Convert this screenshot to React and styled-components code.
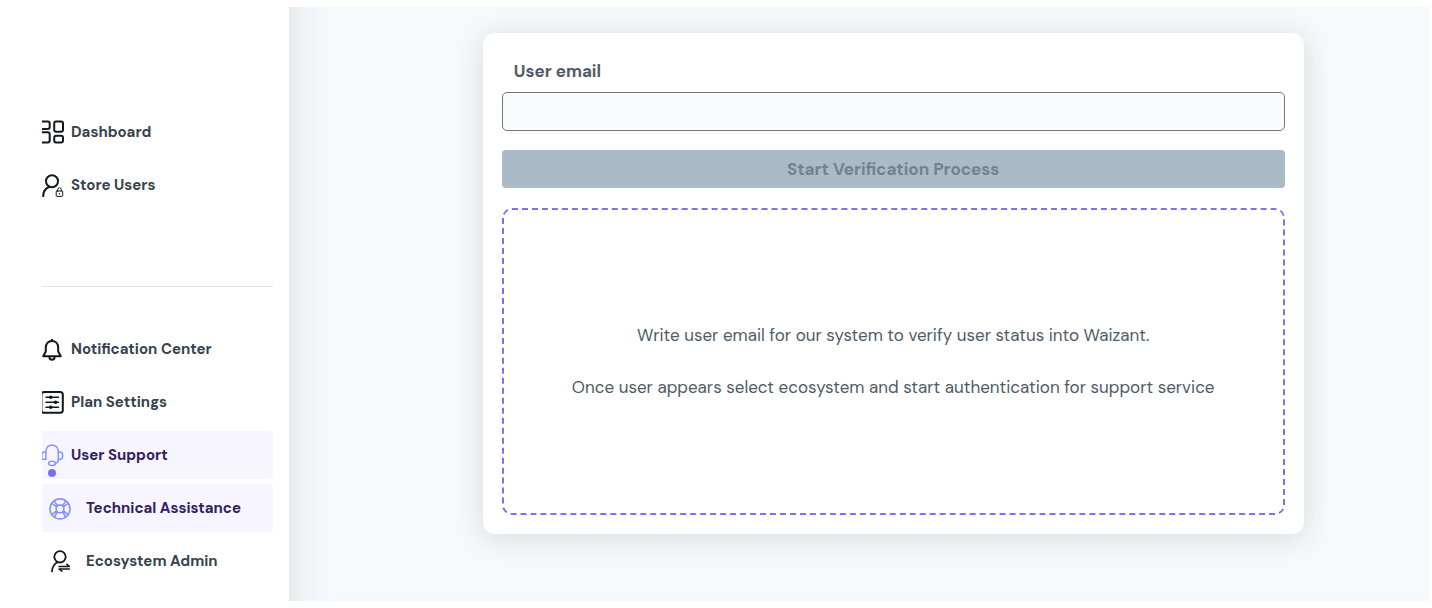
import React from "react";
import styled, { createGlobalStyle, css } from "styled-components";

const GlobalStyle = createGlobalStyle`
  *, *::before, *::after { box-sizing: border-box; }
  body {
    margin: 0;
    background: #ffffff;
    color: #4b5563;
    font-family: "DM Sans", "Open Sans", "Liberation Sans", sans-serif;
  }
`;

const Page = styled.div`
  display: grid;
  grid-template-columns: 289px 1fr;
  min-height: 100vh;
  padding: 7px 3px 7px 0;
`;

const Sidebar = styled.aside`
  padding: 101px 16px 0 42px;
`;

const NavList = styled.ul`
  display: flex;
  flex-direction: column;
  gap: 5px;
  margin: 0;
  padding: 0;
  list-style: none;
`;

const Divider = styled.hr`
  height: 1px;
  margin: 77px 0 38px;
  border: 0;
  background: #dde3ea;
`;

const NavLink = styled.a`
  position: relative;
  display: flex;
  align-items: center;
  gap: ${({ $sub }) => ($sub ? 14 : 5)}px;
  height: 48px;
  padding-left: ${({ $sub }) => ($sub ? 6 : 0)}px;
  border-radius: 0 4px 4px 0;
  color: #36434f;
  font-size: 15px;
  font-weight: 700;
  line-height: 20px;
  white-space: nowrap;
  text-decoration: none;

  ${({ $active }) =>
    $active &&
    css`
      background: #f7f5ff;
      color: #32205f;
    `}
`;

const Icon = styled.svg`
  flex: none;
  width: 24px;
  height: 24px;
  overflow: hidden;
  fill: none;
  stroke: ${({ $accent }) => ($accent ? "#8795fb" : "#10181f")};
  stroke-width: 2;
  stroke-linecap: round;
  stroke-linejoin: round;
`;

const ActiveDot = styled.span`
  position: absolute;
  bottom: 2px;
  left: 6px;
  width: 8px;
  height: 8px;
  border-radius: 50%;
  background: #7b6ef6;
`;

const Main = styled.main`
  padding: 26px 11% 26px 17%;
  background: linear-gradient(to right, #e7eaec, #f0f3f5 14px, #f5f9fc 36px);
`;

const Card = styled.form`
  display: flex;
  flex-direction: column;
  padding: 19px;
  border-radius: 12px;
  background: #ffffff;
  box-shadow: 0 4px 28px rgba(40, 40, 30, 0.14);
`;

const Label = styled.label`
  margin-bottom: 9px;
  padding: 7px 12px 0;
  color: #4f5b67;
  font-size: 17px;
  font-weight: 700;
  line-height: 24px;
`;

const EmailInput = styled.input`
  height: 39px;
  padding: 0 12px;
  border: 1px solid #6c7884;
  border-radius: 5px;
  background: #fafbfd;
  color: inherit;
  font: inherit;
`;

const SubmitButton = styled.button`
  height: 38px;
  margin: 19px 0 20px;
  border: 0;
  border-radius: 4px;
  background: #abbac7;
  color: #718293;
  font-family: inherit;
  font-size: 17px;
  font-weight: 700;
`;

const Hint = styled.section`
  display: flex;
  flex-direction: column;
  align-items: center;
  justify-content: center;
  gap: 28px;
  min-height: 307px;
  padding-bottom: 2px;
  border: 2px dashed #7f70f5;
  border-radius: 10px;
  text-align: center;
`;

const HintText = styled.p`
  margin: 0;
  color: #4f5b67;
  font-size: 17px;
  line-height: 24px;
`;

const DashboardIcon = () => (
  <Icon viewBox="0 0.8 24 24" aria-hidden="true">
    <rect x="-3" y="2.3" width="10.7" height="7.4" rx="2" />
    <rect x="-3" y="13" width="10.7" height="10.3" rx="2" />
    <rect x="12.2" y="2.3" width="8.8" height="10.2" rx="2" />
    <rect x="12.2" y="16.5" width="8.8" height="6.8" rx="2" />
  </Icon>
);

const StoreUsersIcon = () => (
  <Icon viewBox="0 0 24 24" aria-hidden="true">
    <circle cx="10" cy="8.3" r="6" />
    <path d="M1.2 23.2C1.2 19 3.2 15.6 7 14" />
    <g strokeWidth="1">
      <rect x="14.2" y="18" width="6.5" height="5.4" rx="0.8" />
      <path d="M15.7 18V16.6a1.8 1.8 0 0 1 3.6 0V18M17.4 20.4v0.6" />
    </g>
  </Icon>
);

const BellIcon = () => (
  <Icon viewBox="0 0 24 24" aria-hidden="true">
    <path d="M10 2.8V4M10 4C6 4 3.8 7 3.8 10.6V14.5L1.2 19.2H18.8L16.2 14.5V10.6C16.2 7 14 4 10 4Z" />
    <path d="M7.4 20.5C7.8 23.4 12.2 23.4 12.6 20.5" />
  </Icon>
);

const SettingsIcon = () => (
  <Icon viewBox="0 0 24 24" aria-hidden="true">
    <rect x="-0.6" y="2" width="21.4" height="20.8" rx="2.6" />
    <path strokeWidth="1.4" d="M4 7.3h12.5M4 12.3h12.5M4 17.3h12.5" />
    <path strokeWidth="3.4" d="M8.7 7.3h0.1M13.5 12.3h0.1M8.7 17.3h0.1" />
  </Icon>
);

const HeadsetIcon = () => (
  <Icon viewBox="0 0 24 24" $accent aria-hidden="true">
    <g strokeWidth="1.5">
      <path d="M3.9 16.4V8.2a6.2 6.2 0 0 1 12.4 0v8.2c0 2-1 3.4-2.9 3.8" />
      <path d="M16.3 9h1.5a2.8 2.8 0 0 1 2.8 2.8v1.8a2.8 2.8 0 0 1-2.8 2.8h-1.5" />
      <path d="M3.9 9H2.4A2.8 2.8 0 0 0-0.4 11.8M-0.4 16.2H3.9" />
      <path d="M0 10.4v6" strokeWidth="1" />
      <ellipse cx="10" cy="20.4" rx="3.4" ry="2.2" />
    </g>
  </Icon>
);

const LifebuoyIcon = () => (
  <Icon viewBox="0 -0.2 24 24" $accent aria-hidden="true">
    <g strokeWidth="1.6">
      <circle cx="12" cy="12.7" r="10" />
      <rect x="8.2" y="8.9" width="7.6" height="7.6" rx="3" />
      <path d="M6.4 4.6 9.3 9.6M4 7.1 8.6 10.6M17.6 4.6 14.7 9.6M20 7.1 15.4 10.6M6.4 20.8 9.3 15.8M4 18.3 8.6 14.8M17.6 20.8 14.7 15.8M20 18.3 15.4 14.8" />
    </g>
  </Icon>
);

const EcosystemIcon = () => (
  <Icon viewBox="0 0 24 24" aria-hidden="true">
    <g strokeWidth="1.8">
      <circle cx="12" cy="7.8" r="5.7" />
      <path d="M4 22.4C4.2 18 6 15 9.3 13.2" />
    </g>
    <path strokeWidth="1.5" d="M11 17.4H21.4L18.8 15.4M21.4 20H11L13.8 22.2" />
  </Icon>
);

const primaryNav = [
  { label: "Dashboard", icon: DashboardIcon },
  { label: "Store Users", icon: StoreUsersIcon },
];

const secondaryNav = [
  { label: "Notification Center", icon: BellIcon },
  { label: "Plan Settings", icon: SettingsIcon },
  { label: "User Support", icon: HeadsetIcon, active: true, dot: true },
  { label: "Technical Assistance", icon: LifebuoyIcon, active: true, sub: true },
  { label: "Ecosystem Admin", icon: EcosystemIcon, sub: true },
];

const Nav = ({ items, label }) => (
  <nav aria-label={label}>
    <NavList>
      {items.map(({ label: text, icon: ItemIcon, active, sub, dot }) => (
        <li key={text}>
          <NavLink href="#" $active={active} $sub={sub}>
            <ItemIcon />
            {text}
            {dot && <ActiveDot />}
          </NavLink>
        </li>
      ))}
    </NavList>
  </nav>
);

export default function App() {
  return (
    <>
      <GlobalStyle />
      <Page>
        <Sidebar>
          <Nav items={primaryNav} label="Store" />
          <Divider />
          <Nav items={secondaryNav} label="Account" />
        </Sidebar>
        <Main>
          <Card>
            <Label htmlFor="user-email">User email</Label>
            <EmailInput id="user-email" type="email" />
            <SubmitButton type="submit" disabled>
              Start Verification Process
            </SubmitButton>
            <Hint>
              <HintText>
                Write user email for our system to verify user status into Waizant.
              </HintText>
              <HintText>
                Once user appears select ecosystem and start authentication for support service
              </HintText>
            </Hint>
          </Card>
        </Main>
      </Page>
    </>
  );
}
